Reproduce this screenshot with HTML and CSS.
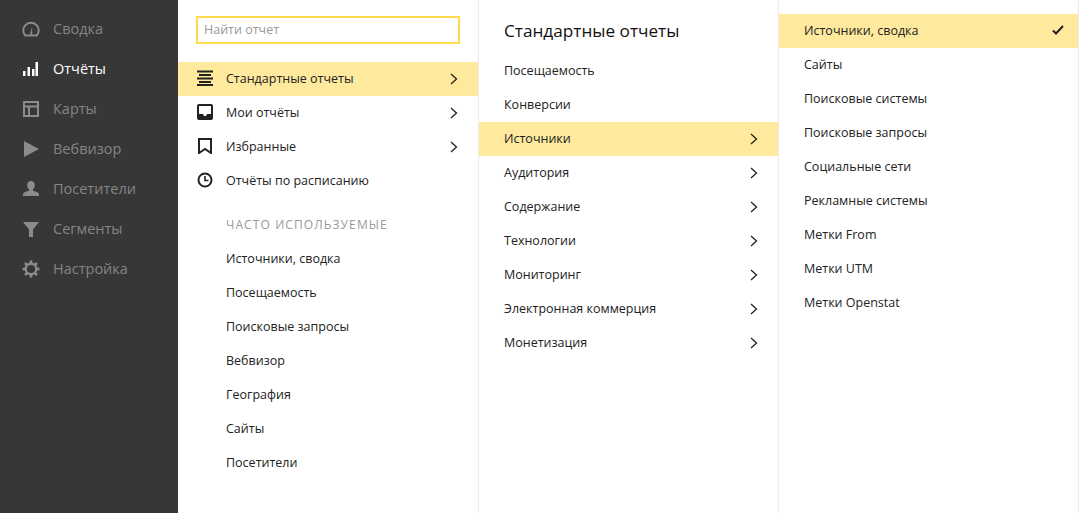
FILE: index.html
```html
<!DOCTYPE html>
<html lang="ru">
<head>
<meta charset="utf-8">
<title>Отчёты</title>
<link rel="stylesheet" href="styles.css">
</head>
<body>
<div class="app">
  <nav class="side">
    <a class="side-item"><svg class="side-icon" viewBox="0 0 18 18"><path d="M3.200 15.500A7.700 7.700 0 1 1 14.800 15.500Z" fill="none" stroke="currentColor" stroke-width="2"/><path d="M8 14.500 10 7 10.400 14.500Z" fill="currentColor"/></svg><span>Сводка</span></a>
    <a class="side-item is-active"><svg class="side-icon" viewBox="0 0 18 18"><path d="M1 11h2.500v5H1zM5.500 7H8v9H5.500zM10 9h2.500v7H10zM13.500 2H16v14h-2.500z" fill="currentColor"/></svg><span>Отчёты</span></a>
    <a class="side-item"><svg class="side-icon" viewBox="0 0 18 18"><path d="M2 2h14v14H2zM2 6.500h14M7 6.500V16" fill="none" stroke="currentColor" stroke-width="2"/></svg><span>Карты</span></a>
    <a class="side-item"><svg class="side-icon" viewBox="0 0 18 18"><path d="M2 1l15 8-15 8z" fill="currentColor"/></svg><span>Вебвизор</span></a>
    <a class="side-item"><svg class="side-icon" viewBox="0 0 18 18"><path d="M9 1c2.500 0 3.800 2 3.800 4.200 0 1.800-.8 3.200-1.800 4.100v1.500c2.500.8 5.500 1.400 6 3.200v2H1v-2c.5-1.800 3.500-2.400 6-3.200V9.300C6 8.400 5.200 7 5.200 5.200 5.200 3 6.500 1 9 1z" fill="currentColor"/></svg><span>Посетители</span></a>
    <a class="side-item"><svg class="side-icon" viewBox="0 0 18 18"><path d="M1 2h16l-6 7.500V17H7V9.500z" fill="currentColor"/></svg><span>Сегменты</span></a>
    <a class="side-item"><svg class="side-icon" viewBox="0 0 18 18"><circle cx="9" cy="9" r="5.300" fill="none" stroke="currentColor" stroke-width="2.400"/><path d="M9 .5V3.500M9 14.500v3M.5 9h3M14.500 9h3M3 3l2.100 2.100M12.900 12.900 15 15M3 15l2.100-2.100M12.900 5.100 15 3" stroke="currentColor" stroke-width="2.600"/></svg><span>Настройка</span></a>
  </nav>

  <section class="col col-first">
    <div class="search-box"><span>Найти отчет</span></div>
    <ul class="list">
      <li class="row has-icon is-current"><svg class="row-icon" viewBox="0 0 16 16"><path d="M0 1.500h16M2 5h12M0 8.500h16M2 12h12M0 15h16" stroke="#222" stroke-width="2" fill="none"/></svg><span>Стандартные отчеты</span><svg class="chev" viewBox="0 0 8 12"><path d="M1 1l5.500 5L1 11" fill="none" stroke="#222" stroke-width="1.300"/></svg></li>
      <li class="row has-icon"><svg class="row-icon" viewBox="0 0 16 16"><path d="M2 0h12a2 2 0 0 1 2 2v12a2 2 0 0 1-2 2H2a2 2 0 0 1-2-2V2a2 2 0 0 1 2-2zm0 2v8h4l1 2h2l1-2h4V2z" fill="#222" fill-rule="evenodd"/></svg><span>Мои отчёты</span><svg class="chev" viewBox="0 0 8 12"><path d="M1 1l5.500 5L1 11" fill="none" stroke="#222" stroke-width="1.300"/></svg></li>
      <li class="row has-icon"><svg class="row-icon" viewBox="0 0 16 16"><path d="M2 1h12v14L8 11 2 15z" fill="none" stroke="#222" stroke-width="2"/></svg><span>Избранные</span><svg class="chev" viewBox="0 0 8 12"><path d="M1 1l5.500 5L1 11" fill="none" stroke="#222" stroke-width="1.300"/></svg></li>
      <li class="row has-icon"><svg class="row-icon" viewBox="0 0 16 16"><circle cx="8" cy="8" r="6.500" fill="none" stroke="#222" stroke-width="2"/><path d="M8 4v4.500h3.500" fill="none" stroke="#222" stroke-width="1.600"/></svg><span>Отчёты по расписанию</span></li>
    </ul>
    <h3 class="group-title">ЧАСТО ИСПОЛЬЗУЕМЫЕ</h3>
    <ul class="list">
      <li class="row has-indent"><span>Источники, сводка</span></li>
      <li class="row has-indent"><span>Посещаемость</span></li>
      <li class="row has-indent"><span>Поисковые запросы</span></li>
      <li class="row has-indent"><span>Вебвизор</span></li>
      <li class="row has-indent"><span>География</span></li>
      <li class="row has-indent"><span>Сайты</span></li>
      <li class="row has-indent"><span>Посетители</span></li>
    </ul>
  </section>

  <section class="col col-second">
    <h2 class="col-title">Стандартные отчеты</h2>
    <ul class="list">
      <li class="row"><span>Посещаемость</span></li>
      <li class="row"><span>Конверсии</span></li>
      <li class="row is-current"><span>Источники</span><svg class="chev" viewBox="0 0 8 12"><path d="M1 1l5.500 5L1 11" fill="none" stroke="#222" stroke-width="1.300"/></svg></li>
      <li class="row"><span>Аудитория</span><svg class="chev" viewBox="0 0 8 12"><path d="M1 1l5.500 5L1 11" fill="none" stroke="#222" stroke-width="1.300"/></svg></li>
      <li class="row"><span>Содержание</span><svg class="chev" viewBox="0 0 8 12"><path d="M1 1l5.500 5L1 11" fill="none" stroke="#222" stroke-width="1.300"/></svg></li>
      <li class="row"><span>Технологии</span><svg class="chev" viewBox="0 0 8 12"><path d="M1 1l5.500 5L1 11" fill="none" stroke="#222" stroke-width="1.300"/></svg></li>
      <li class="row"><span>Мониторинг</span><svg class="chev" viewBox="0 0 8 12"><path d="M1 1l5.500 5L1 11" fill="none" stroke="#222" stroke-width="1.300"/></svg></li>
      <li class="row"><span>Электронная коммерция</span><svg class="chev" viewBox="0 0 8 12"><path d="M1 1l5.500 5L1 11" fill="none" stroke="#222" stroke-width="1.300"/></svg></li>
      <li class="row"><span>Монетизация</span><svg class="chev" viewBox="0 0 8 12"><path d="M1 1l5.500 5L1 11" fill="none" stroke="#222" stroke-width="1.300"/></svg></li>
    </ul>
  </section>

  <section class="col col-third">
    <ul class="list">
      <li class="row is-current"><span>Источники, сводка</span><svg class="check" viewBox="0 0 12 10"><path d="M1 5.500 4 8.500 11 1" fill="none" stroke="#222" stroke-width="2"/></svg></li>
      <li class="row"><span>Сайты</span></li>
      <li class="row"><span>Поисковые системы</span></li>
      <li class="row"><span>Поисковые запросы</span></li>
      <li class="row"><span>Социальные сети</span></li>
      <li class="row"><span>Рекламные системы</span></li>
      <li class="row"><span>Метки From</span></li>
      <li class="row"><span>Метки UTM</span></li>
      <li class="row"><span>Метки Openstat</span></li>
    </ul>
  </section>
</div>
</body>
</html>
```

FILE: styles.css
```css
* { box-sizing: border-box; }
html, body { margin: 0; height: 100%; overflow: hidden; }
body { font-family: "Open Sans", "Noto Sans", sans-serif; font-size: 12.5px; color: #222; background: #fff; }
ul { list-style: none; margin: 0; padding: 0; }
h2, h3 { margin: 0; font-weight: 400; }

.app { display: flex; height: 513px; }

.side { flex: 0 0 178px; background: #373737; padding-top: 8px; }
.side-item { display: flex; align-items: center; height: 40px; padding-left: 22px; color: #858585; font-size: 14.5px; }
.side-item.is-active { color: #fff; }
.side-icon { width: 18px; height: 18px; margin-right: 13px; flex: none; margin-top: 2px; }
.side-item .side-icon { color: #8c8c8c; }
.side-item.is-active .side-icon { color: #fff; }

.col { flex: 0 0 300px; border-right: 1px solid #ececec; }
.col-first { flex-basis: 301px; padding-top: 16px; }
.col-second { padding-top: 14px; }
.col-third { padding-top: 14px; }

.search-box { height: 28px; margin: 0 18px 18px; border: 2px solid #ffdb4d; padding: 0 6px 2px; display: flex; align-items: center; color: #999; }

.row { display: flex; align-items: center; height: 34px; padding: 0 18px 2px 25px; }
.row span { flex: 1; }
.row.has-icon { padding-left: 19px; }
.row.has-indent { padding-left: 48px; }
.row.is-current { background: #fee99d; }

.row-icon { width: 16px; height: 16px; margin-right: 13px; flex: none; }
.chev { width: 8px; height: 12px; margin: 2px 2px 0 0; flex: none; }
.check { width: 12px; height: 10px; flex: none; margin: 0 -4px 0 0; }

.group-title { font-size: 12px; letter-spacing: 1.1px; color: #999; padding: 15px 0 0 48px; height: 44px; line-height: 24px; }

.col-title { font-size: 17.200px; color: #111; height: 34px; padding-left: 25px; line-height: 34px; margin-bottom: 6px; }
```
